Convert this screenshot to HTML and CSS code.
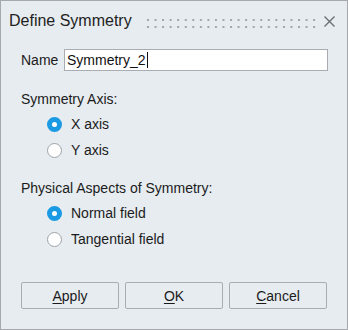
FILE: index.html
```html
<!DOCTYPE html>
<html lang="en">
<head>
    <meta charset="UTF-8">
    <title>Define Symmetry</title>
    <link rel="stylesheet" href="styles.css">
</head>
<body>
    <div class="dialog">
        <div class="title-bar">
            <span class="title">Define Symmetry</span>
            <svg class="grip" width="170" height="9" viewBox="0 0 170 9">
                <defs>
                    <pattern id="dots" x="0" y="0" width="7.55" height="7" patternUnits="userSpaceOnUse">
                        <rect x="0" y="0" width="2" height="2" fill="#a3a6a9"/>
                    </pattern>
                </defs>
                <rect x="0" y="0" width="170" height="9" fill="url(#dots)"/>
            </svg>
            <svg class="close" width="11" height="11" viewBox="0 0 11 11">
                <path d="M0.5 0.5 L10.5 10.5 M10.5 0.5 L0.5 10.5" stroke="#6b6e71" stroke-width="1.4" fill="none"/>
            </svg>
        </div>

        <div class="name-row">
            <label for="name">Name</label>
            <div class="text-input"><span>Symmetry_2</span><span class="caret"></span></div>
        </div>

        <div class="group-label">Symmetry Axis:</div>
        <div class="radio-row">
            <span class="radio checked"></span>
            <span>X axis</span>
        </div>
        <div class="radio-row">
            <span class="radio"></span>
            <span>Y axis</span>
        </div>

        <div class="group-label second">Physical Aspects of Symmetry:</div>
        <div class="radio-row">
            <span class="radio checked"></span>
            <span>Normal field</span>
        </div>
        <div class="radio-row">
            <span class="radio"></span>
            <span>Tangential field</span>
        </div>

        <div class="buttons">
            <button class="btn"><u>A</u>pply</button>
            <button class="btn"><u>O</u>K</button>
            <button class="btn"><u>C</u>ancel</button>
        </div>
    </div>
</body>
</html>
```

FILE: styles.css
```css
* {
    margin: 0;
    padding: 0;
    box-sizing: border-box;
}

body {
    font-family: 'Liberation Sans', Arial, sans-serif;
    font-size: 14px;
    color: #1b1b1b;
    background: #e6ecf0;
}

.dialog {
    width: 348px;
    height: 330px;
    border: 1px solid #a6aaae;
    background: #e6ecf0;
    display: flex;
    flex-direction: column;
}

.title-bar {
    height: 40px;
    display: flex;
    align-items: center;
    padding-left: 8px;
}

.title {
    font-size: 16px;
    color: #222;
    width: 138px;
}

.grip {
    display: block;
    margin-top: 5px;
}

.close {
    display: block;
    margin-left: 7px;
    margin-top: 1px;
}

.name-row {
    display: flex;
    align-items: center;
    margin-top: 8px;
    padding: 0 19px 0 20px;
    gap: 6px;
}

.name-row label {
    width: 37px;
}

.text-input {
    flex: 1;
    height: 22px;
    background: #fff;
    border: 1px solid #a9adb1;
    display: flex;
    align-items: center;
    padding-left: 2px;
    color: #111;
}

.caret {
    display: inline-block;
    width: 1px;
    height: 16px;
    background: #111;
    margin-left: 1px;
}

.group-label {
    margin-top: 20px;
    padding-left: 20px;
    line-height: 16px;
}

.group-label.second {
    margin-top: 17px;
}

.radio-row {
    height: 26px;
    display: flex;
    align-items: center;
    padding-left: 46px;
    gap: 9px;
}

.group-label + .radio-row {
    margin-top: 4px;
}

.radio {
    width: 15px;
    height: 15px;
    border-radius: 50%;
    background: #fff;
    border: 1px solid #9fa3a7;
}

.radio.checked {
    border: 5px solid #1b9ae4;
    background: #fff;
}

.buttons {
    display: flex;
    gap: 6px;
    margin-top: auto;
    padding: 0 20px 20px 20px;
}

.btn {
    width: 98px;
    height: 27px;
    border: 1px solid #a9adb1;
    border-radius: 2px;
    background: #e6ecf0;
    font-family: 'Liberation Sans', Arial, sans-serif;
    font-size: 14px;
    color: #1b1b1b;
}

.btn u {
    text-decoration-thickness: 1px;
    text-underline-offset: 2px;
}
```
